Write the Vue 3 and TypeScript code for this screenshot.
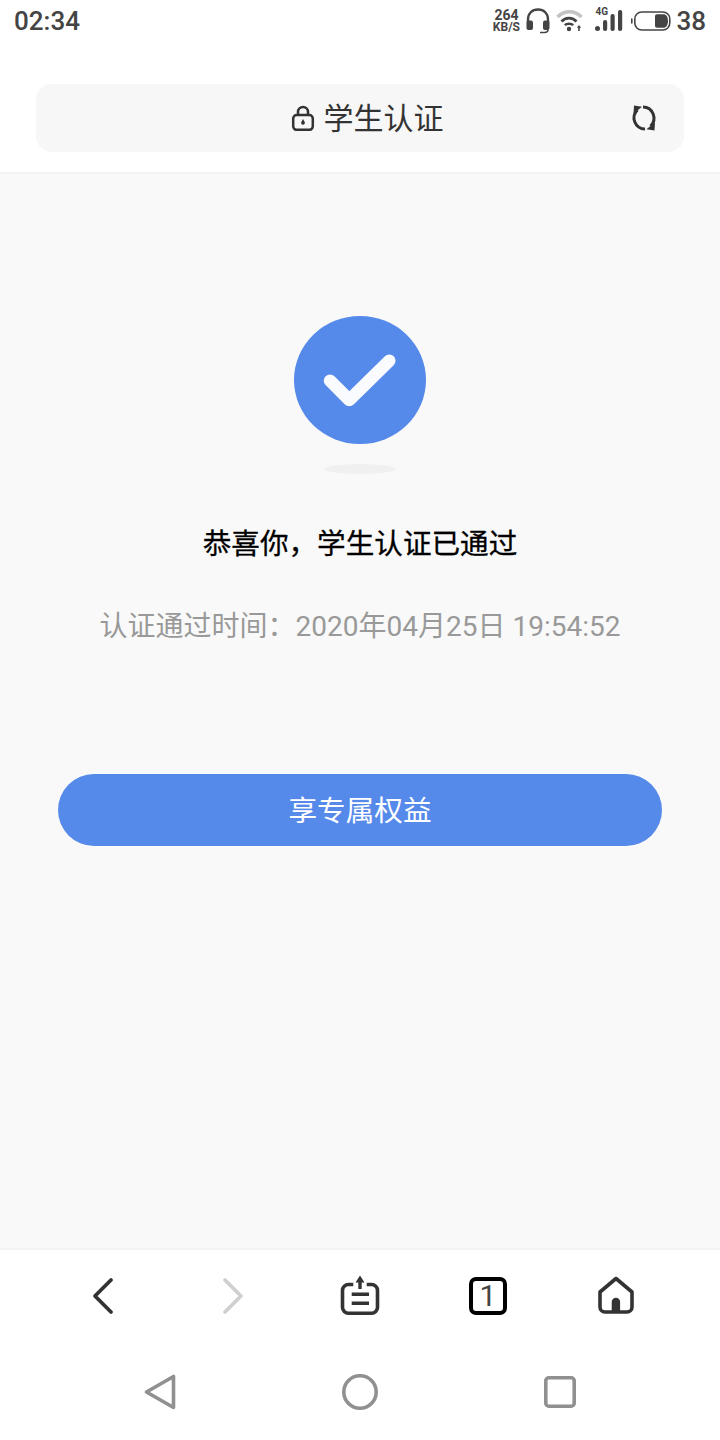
<template>
  <div class="page">
    <!-- Status bar -->
    <div class="status-bar">
      <span class="clock">02:34</span>
      <div class="status-icons">
        <div class="speed">
          <span class="speed-num">264</span>
          <span class="speed-unit">KB/S</span>
        </div>
        <svg class="ic-headset" width="24" height="26" viewBox="0 0 24 26" fill="none">
          <path d="M2 15V11.500C2 5.500 6 1.500 12 1.500s10 4 10 10V15" stroke="#444" stroke-width="2.400" />
          <rect x="0.500" y="12.500" width="6.500" height="9.500" rx="2" fill="#444" />
          <rect x="17" y="12.500" width="6.500" height="9.500" rx="2" fill="#444" />
          <path d="M22 21.500c0 2-1.500 3-3.500 3H14" stroke="#444" stroke-width="1.600" />
        </svg>
        <svg class="ic-wifi" width="27" height="24" viewBox="0 0 27 24" fill="none">
          <path d="M1.500 8C8 1 19 1 25.500 8" stroke="#c4c4c4" stroke-width="3.600" />
          <path d="M5.500 12.500C9.500 8 16.500 8 20.500 12.500" stroke="#444" stroke-width="2.800" />
          <path d="M8.800 16.200C10.800 14.200 15.200 14.200 17.200 16.200" stroke="#444" stroke-width="2.600" />
          <circle cx="13" cy="20" r="2.200" fill="#444" />
          <path d="M23 22v-4" stroke="#444" stroke-width="1.600" />
          <path d="M20.800 18.800L23 16l2.200 2.800z" fill="#444" />
        </svg>
        <div class="signal">
          <span class="net">4G</span>
          <svg width="28" height="22" viewBox="0 0 28 22">
            <circle cx="2.500" cy="18.500" r="2.500" fill="#444" />
            <rect x="8" y="10" width="4.200" height="11" rx="2" fill="#444" />
            <rect x="15.500" y="4" width="4.200" height="17" rx="2" fill="#444" />
            <rect x="23" y="0" width="4.200" height="21" rx="2" fill="#444" />
          </svg>
        </div>
        <svg class="ic-battery" width="40" height="20" viewBox="0 0 40 20" fill="none">
          <rect x="3.800" y="1" width="35" height="18" rx="7" stroke="#444" stroke-width="1.600" />
          <path d="M0.800 8v4" stroke="#444" stroke-width="1.600" stroke-linecap="round" />
          <path d="M26 3.200h6.500c2.600 0 4.500 2.500 4.500 6.800s-1.900 6.800-4.500 6.800H26c-1.200 0-2-.8-2-2V5.200c0-1.200.8-2 2-2z" fill="#444" />
        </svg>
        <span class="level">38</span>
      </div>
    </div>

    <!-- Address bar -->
    <header class="top">
      <div class="address">
        <div class="address-title">
          <svg width="24" height="26" viewBox="0 0 24 26" fill="none">
            <rect x="2.200" y="10" width="19.600" height="14.800" rx="3.500" stroke="#333" stroke-width="2.500" />
            <path d="M7 10V7a5 5 0 0 1 10 0v3" stroke="#333" stroke-width="2.500" />
            <path d="M12 14l1.700 2.900a1.900 1.900 0 1 1-3.400 0z" fill="#333" />
          </svg>
          <span class="address-text">学生认证</span>
        </div>
        <svg class="reload" width="28" height="28" viewBox="0 0 28 28" fill="none">
          <path d="M7.500 6A11 11 0 0 0 15 25" stroke="#333" stroke-width="3" />
          <path d="M13 3A11 11 0 0 1 20.500 22" stroke="#333" stroke-width="3" />
          <path d="M4 1.500l8 1.300-8.500 7z" fill="#333" />
          <path d="M24.500 26.500l-8-1.300 8.500-7z" fill="#333" />
        </svg>
      </div>
    </header>

    <!-- Result -->
    <main class="main">
      <svg class="tick" width="132" height="128" viewBox="0 0 132 128">
        <ellipse cx="66" cy="64" rx="66" ry="64" fill="#5589ea" />
        <path d="M36 64.700L55.300 84l40-39.300" fill="none" stroke="#fafbfe" stroke-width="12.500" stroke-linecap="round" stroke-linejoin="round" />
      </svg>
      <div class="shadow"></div>
      <h1 class="title">恭喜你，学生认证已通过</h1>
      <p class="time">认证通过时间：2020年04月25日 19:54:52</p>
      <button class="cta" type="button"><span>享专属权益</span></button>
    </main>

    <!-- Browser toolbar -->
    <nav class="toolbar">
      <svg width="26" height="38" viewBox="0 0 26 38" fill="none">
        <path d="M20 3L4 19l16 16" stroke="#333" stroke-width="3.800" stroke-linecap="round" stroke-linejoin="round" />
      </svg>
      <svg width="26" height="38" viewBox="0 0 26 38" fill="none">
        <path d="M6 3l16 16L6 35" stroke="#d0d0d0" stroke-width="3.800" stroke-linecap="round" stroke-linejoin="round" />
      </svg>
      <svg width="42" height="42" viewBox="0 0 42 42" fill="none">
        <path d="M14.300 9.500H9.500a6 6 0 0 0-6 6v16.700a6 6 0 0 0 6 6h23a6 6 0 0 0 6-6V15.500a6 6 0 0 0-6-6h-4.800" stroke="#333" stroke-width="3.600" />
        <path d="M21 14V6" stroke="#333" stroke-width="3.400" />
        <path d="M16.500 7.500L21 .5l4.500 7z" fill="#333" />
        <path d="M12.700 19.300H30M12.700 28.300H30" stroke="#333" stroke-width="3.400" />
      </svg>
      <div class="tabs">1</div>
      <svg width="38" height="40" viewBox="0 0 38 40" fill="none">
        <path d="M3 16L19 2.500 35 16v15a5 5 0 0 1-5 5H8a5 5 0 0 1-5-5z" stroke="#333" stroke-width="3.600" stroke-linejoin="round" />
        <path d="M14.700 37V26a4.200 4.200 0 0 1 8.400 0v11z" fill="#333" />
      </svg>
    </nav>

    <!-- System navigation -->
    <div class="sys-nav">
      <svg width="32" height="36" viewBox="0 0 32 36" fill="none">
        <path d="M2.500 18L29.500 2.500v31z" stroke="#909090" stroke-width="3.600" stroke-linejoin="round" />
      </svg>
      <svg width="36" height="36" viewBox="0 0 36 36" fill="none">
        <circle cx="18" cy="18" r="16.200" stroke="#909090" stroke-width="3.600" />
      </svg>
      <svg width="32" height="32" viewBox="0 0 32 32" fill="none">
        <rect x="1.800" y="1.800" width="28.400" height="28.400" rx="3" stroke="#909090" stroke-width="3.600" />
      </svg>
    </div>
  </div>
</template>

<script setup lang="ts">
</script>

<style>
html,
body {
  margin: 0;
  background: #fff;
}
</style>

<style scoped>
.page {
  width: 720px;
  height: 1440px;
  display: flex;
  flex-direction: column;
  background: #fff;
  font-family: Roboto, "Noto Sans CJK SC", sans-serif;
}

.status-bar {
  height: 42px;
  padding: 0 14px;
  display: flex;
  align-items: center;
  justify-content: space-between;
  flex-shrink: 0;
}

.clock {
  font-size: 26px;
  font-weight: 500;
  color: #444;
}

.status-icons {
  display: flex;
  align-items: center;
}

.speed {
  width: 28px;
  display: flex;
  flex-direction: column;
  align-items: center;
  color: #444;
  font-weight: 700;
}

.speed-num {
  font-size: 14px;
  line-height: 13px;
}

.speed-unit {
  font-size: 12px;
  line-height: 11px;
}

.ic-headset,
.ic-wifi {
  margin-left: 6px;
}

.signal {
  position: relative;
  margin-left: 12px;
}

.signal svg {
  display: block;
}

.net {
  position: absolute;
  left: 0;
  top: -4px;
  font-size: 10px;
  line-height: 12px;
  font-weight: 700;
  color: #444;
}

.ic-battery {
  margin-left: 8px;
}

.level {
  margin-left: 5px;
  font-size: 26px;
  font-weight: 500;
  color: #444;
}

.top {
  height: 132px;
  padding: 42px 36px 0;
  box-sizing: border-box;
  flex-shrink: 0;
  border-bottom: 2px solid #f3f3f3;
}

.address {
  height: 68px;
  border-radius: 16px;
  background: #f7f7f7;
  position: relative;
  display: flex;
  align-items: center;
  justify-content: center;
}

.address-title {
  display: flex;
  align-items: center;
  gap: 9px;
  padding-left: 14px;
  font-size: 30px;
  color: #333;
}

.address-text {
  margin-top: -5px;
}

.reload {
  position: absolute;
  right: 26px;
  top: 20px;
}

.main {
  flex: 1;
  background: #f9f9f9;
  display: flex;
  flex-direction: column;
  align-items: center;
  padding-top: 142px;
}

.tick {
  display: block;
}

.shadow {
  width: 72px;
  height: 10px;
  margin-top: 20px;
  border-radius: 50%;
  background: #f0f0f0;
}

.title {
  margin: 50px 0 0;
  font-size: 28.600px;
  line-height: 40px;
  font-weight: 400;
  -webkit-text-stroke: 0.3px #000;
  color: #000;
}

.time {
  margin: 43px 0 0;
  font-size: 28px;
  line-height: 40px;
  color: #999;
}

.cta {
  width: 604px;
  height: 72px;
  margin-top: 127px;
  padding: 0 0 3px;
  border: 0;
  border-radius: 36px;
  background: #5589ea;
  color: #fff;
  font-family: inherit;
  font-size: 28.600px;
}

.toolbar {
  height: 96px;
  box-sizing: border-box;
  flex-shrink: 0;
  padding-bottom: 2px;
  border-top: 2px solid #f3f3f3;
  background: #fff;
  display: grid;
  grid-template-columns: repeat(5, 128px);
  justify-content: center;
  justify-items: center;
  align-items: center;
}

.tabs {
  width: 38px;
  height: 38px;
  box-sizing: border-box;
  border: 4px solid #000;
  border-radius: 7px;
  display: flex;
  align-items: center;
  justify-content: center;
  font-size: 30px;
  line-height: 1;
  color: #444;
}

.sys-nav {
  height: 96px;
  flex-shrink: 0;
  background: #fff;
  display: grid;
  grid-template-columns: repeat(3, 200px);
  justify-content: center;
  justify-items: center;
  align-items: center;
}
</style>
